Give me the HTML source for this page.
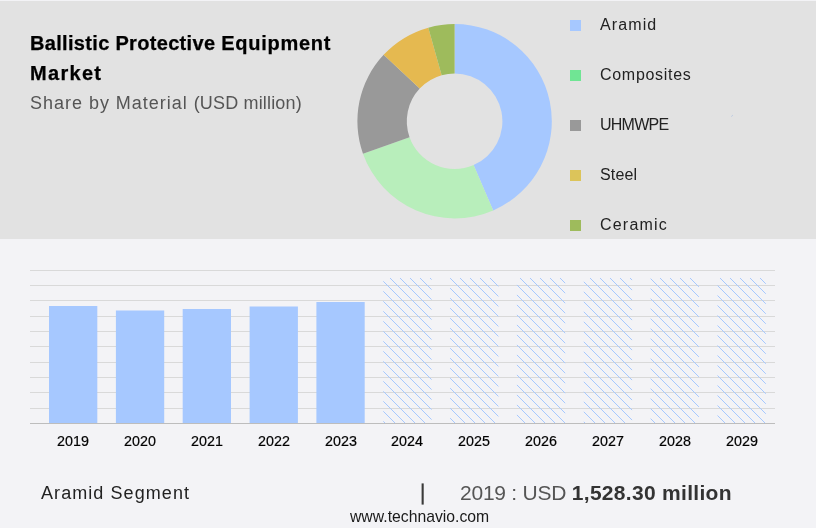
<!DOCTYPE html>
<html><head><meta charset="utf-8"><title>Ballistic Protective Equipment Market</title>
<style>
html,body{margin:0;padding:0;}
body{width:816px;height:528px;background:#f3f3f6;position:relative;overflow:hidden;font-family:"Liberation Sans",sans-serif;}
.top{position:absolute;left:0;top:1px;width:816px;height:238px;background:#e2e2e2;}
svg{position:absolute;left:0;top:0;}
.t1,.t2,.lt,.yl,.seg,.val,.web{will-change:transform;}
.t1{position:absolute;left:30px;top:29px;font-size:20px;font-weight:bold;color:#000;line-height:29.5px;white-space:nowrap;letter-spacing:0.38px;-webkit-text-stroke:0.25px #000;}
.t2{position:absolute;left:30px;top:92px;font-size:18px;color:#555;white-space:nowrap;line-height:22px;letter-spacing:0.65px;}
.sq{position:absolute;left:570px;width:11px;height:11px;}
.lt{position:absolute;left:600px;font-size:16px;color:#222;line-height:22px;white-space:nowrap;letter-spacing:0.6px;}
.yl{position:absolute;top:432px;width:60px;text-align:center;font-size:14.3px;line-height:18px;color:#000;-webkit-text-stroke:0.2px #000;}
.seg{position:absolute;left:41px;top:482px;font-size:18px;line-height:22px;color:#222;white-space:nowrap;letter-spacing:1.07px;}
.bar{position:absolute;left:421px;top:483px;width:2px;height:21px;background:#333;}
.val{position:absolute;left:460px;top:481px;font-size:21px;line-height:24px;color:#555;white-space:nowrap;letter-spacing:-0.24px;}
.val b{color:#333;letter-spacing:0.3px;}
.web{position:absolute;left:350px;top:508px;font-size:15.75px;line-height:18px;color:#1a1a1a;white-space:nowrap;}
</style></head><body>
<div class="top"></div>
<svg width="816" height="528" viewBox="0 0 816 528">
<defs><pattern id="h" width="10" height="10" patternUnits="userSpaceOnUse" patternTransform="translate(2 0)"><path d="M-1 -1L11 11M-1 9L1 11M9 -1L11 1" stroke="#a6c8ff" stroke-width="1" fill="none"/></pattern></defs>
<path d="M454.60 24.00A97.2 97.2 0 0 1 493.20 210.41L473.58 165.07A47.8 47.8 0 0 0 454.60 73.40Z" fill="#a6c8ff"/>
<path d="M493.20 210.41A97.2 97.2 0 0 1 362.98 153.65L409.54 137.16A47.8 47.8 0 0 0 473.58 165.07Z" fill="#b8eebb"/>
<path d="M362.98 153.65A97.2 97.2 0 0 1 383.63 54.79L419.70 88.54A47.8 47.8 0 0 0 409.54 137.16Z" fill="#999999"/>
<path d="M383.63 54.79A97.2 97.2 0 0 1 428.30 27.63L441.67 75.18A47.8 47.8 0 0 0 419.70 88.54Z" fill="#e5b950"/>
<path d="M428.30 27.63A97.2 97.2 0 0 1 454.60 24.00L454.60 73.40A47.8 47.8 0 0 0 441.67 75.18Z" fill="#9ebb5c"/>
<rect x="30" y="270" width="745" height="1" fill="#d9d9d9"/><rect x="30" y="285" width="745" height="1" fill="#d9d9d9"/><rect x="30" y="300" width="745" height="1" fill="#d9d9d9"/><rect x="30" y="316" width="745" height="1" fill="#d9d9d9"/><rect x="30" y="331" width="745" height="1" fill="#d9d9d9"/><rect x="30" y="346" width="745" height="1" fill="#d9d9d9"/><rect x="30" y="362" width="745" height="1" fill="#d9d9d9"/><rect x="30" y="377" width="745" height="1" fill="#d9d9d9"/><rect x="30" y="392" width="745" height="1" fill="#d9d9d9"/><rect x="30" y="408" width="745" height="1" fill="#d9d9d9"/>
<rect x="49.0" y="306" width="48.3" height="117" fill="#a6c8ff"/><rect x="115.9" y="310.5" width="48.3" height="112.5" fill="#a6c8ff"/><rect x="182.7" y="309" width="48.3" height="114" fill="#a6c8ff"/><rect x="249.6" y="306.5" width="48.3" height="116.5" fill="#a6c8ff"/><rect x="316.4" y="302" width="48.3" height="121" fill="#a6c8ff"/>
<rect x="383.3" y="278" width="48.3" height="145" fill="url(#h)"/><rect x="450.1" y="278" width="48.3" height="145" fill="url(#h)"/><rect x="516.9" y="278" width="48.3" height="145" fill="url(#h)"/><rect x="583.8" y="278" width="48.3" height="145" fill="url(#h)"/><rect x="650.6" y="278" width="48.3" height="145" fill="url(#h)"/><rect x="717.5" y="278" width="48.3" height="145" fill="url(#h)"/>
<rect x="30" y="423" width="745" height="1" fill="#bdbdbd"/>
<rect x="421.6" y="483.4" width="2.1" height="21.2" fill="#3a3a3a"/>
<path d="M731.5 116.8A1.8 1.8 0 0 1 733 115.2" stroke="#9db8e0" stroke-opacity="0.45" stroke-width="1" fill="none"/>
</svg>
<div class="t1"><span style="letter-spacing:0.32px">Ballistic Protective </span><span style="letter-spacing:0.72px">Equipment</span><br><span style="letter-spacing:1.3px">Market</span></div>
<div class="t2"><span style="letter-spacing:0.98px">Share by Material </span><span style="letter-spacing:0.16px">(USD million)</span></div>
<div class="sq" style="top:20px;background:#a6c8ff"></div><div class="lt" style="top:14px;letter-spacing:1.1px">Aramid</div><div class="sq" style="top:70px;background:#70e594"></div><div class="lt" style="top:64px;letter-spacing:0.7px">Composites</div><div class="sq" style="top:120px;background:#999999"></div><div class="lt" style="top:114px;letter-spacing:-0.76px">UHMWPE</div><div class="sq" style="top:170px;background:#dcc45a"></div><div class="lt" style="top:164px;letter-spacing:0.15px">Steel</div><div class="sq" style="top:220px;background:#9ebb5c"></div><div class="lt" style="top:214px;letter-spacing:1.2px">Ceramic</div>
<div class="yl" style="left:43.2px">2019</div><div class="yl" style="left:110.0px">2020</div><div class="yl" style="left:176.9px">2021</div><div class="yl" style="left:243.7px">2022</div><div class="yl" style="left:310.6px">2023</div><div class="yl" style="left:377.4px">2024</div><div class="yl" style="left:444.2px">2025</div><div class="yl" style="left:511.1px">2026</div><div class="yl" style="left:577.9px">2027</div><div class="yl" style="left:644.8px">2028</div><div class="yl" style="left:711.6px">2029</div>
<div class="seg">Aramid Segment</div>
<div class="val">2019 : USD <b>1,528.30 million</b></div>
<div class="web">www.technavio.com</div>
</body></html>
